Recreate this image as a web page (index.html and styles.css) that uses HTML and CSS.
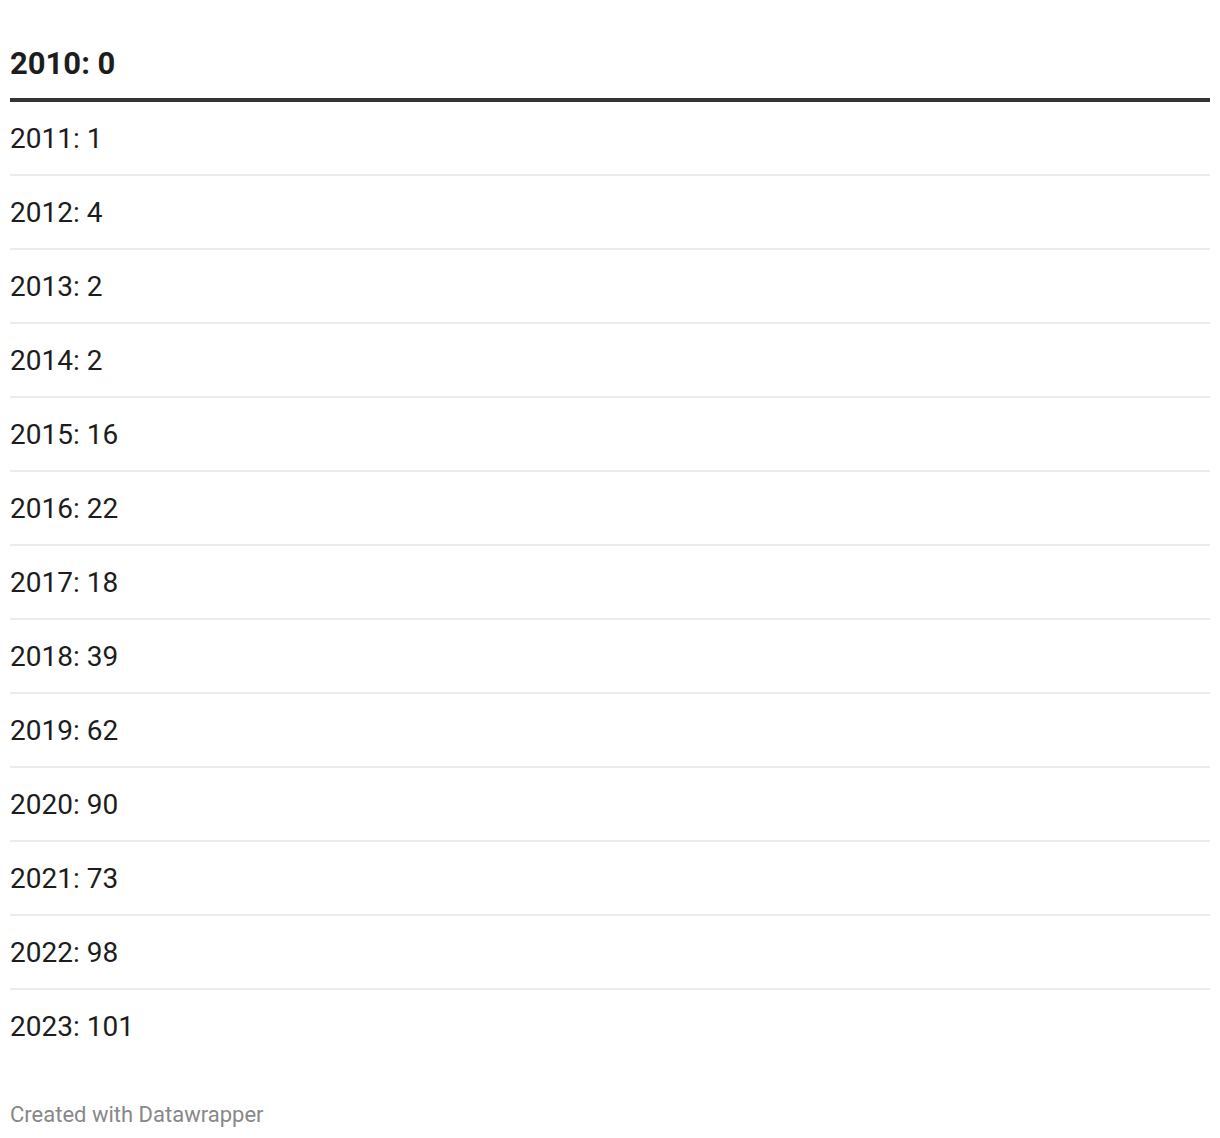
FILE: index.html
```html
<!DOCTYPE html>
<html>
<head>
<meta charset="utf-8">
<link rel="stylesheet" href="styles.css">
</head>
<body>
<div class="chart">
  <div class="head">2010: 0</div>
  <div class="rows">
    <div class="row">2011: 1</div>
    <div class="row">2012: 4</div>
    <div class="row">2013: 2</div>
    <div class="row">2014: 2</div>
    <div class="row">2015: 16</div>
    <div class="row">2016: 22</div>
    <div class="row">2017: 18</div>
    <div class="row">2018: 39</div>
    <div class="row">2019: 62</div>
    <div class="row">2020: 90</div>
    <div class="row">2021: 73</div>
    <div class="row">2022: 98</div>
    <div class="row">2023: 101</div>
  </div>
  <div class="footer">Created with Datawrapper</div>
</div>
</body>
</html>
```
FILE: styles.css
```css
html, body {
  margin: 0;
  padding: 0;
  background: #ffffff;
}
.chart {
  padding: 0 10px;
  font-family: Roboto, "Liberation Sans", sans-serif;
  color: #1d1d1d;
}
.head {
  font-size: 31px;
  font-weight: 700;
  line-height: 32px;
  padding: 48px 0 18px;
  border-bottom: 4px solid #333333;
}
.rows {
  display: flex;
  flex-direction: column;
}
.row {
  font-size: 28px;
  line-height: 32px;
  padding: 21px 0 19px;
  border-bottom: 2px solid #ececec;
}
.row:last-child {
  border-bottom: none;
}
.footer {
  margin-top: 40px;
  font-size: 22px;
  line-height: 26px;
  color: #888888;
}
```
